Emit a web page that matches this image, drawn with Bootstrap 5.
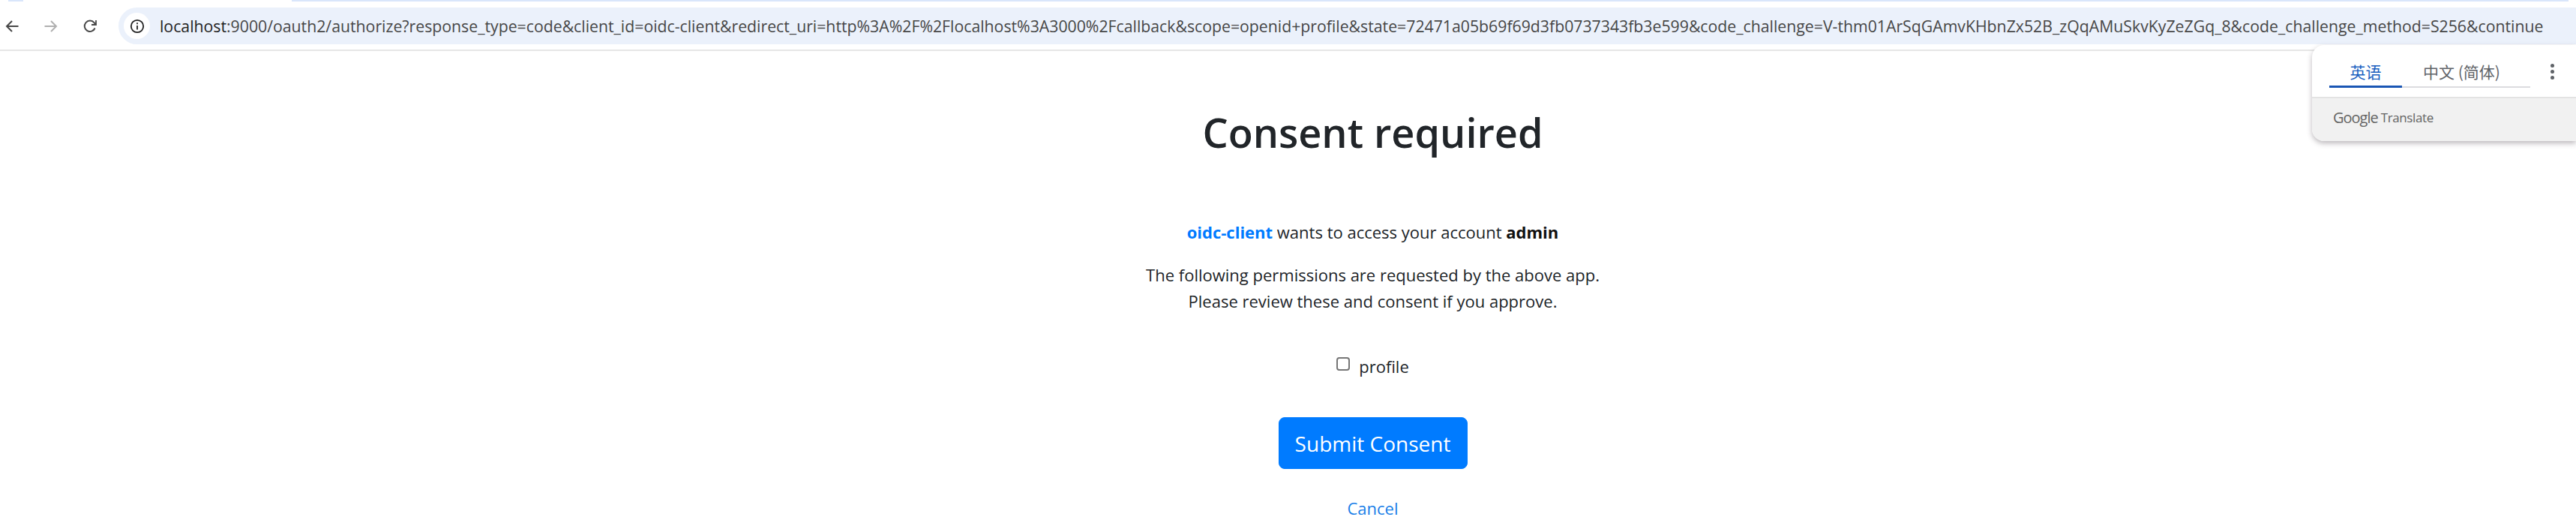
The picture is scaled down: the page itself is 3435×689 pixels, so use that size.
<!DOCTYPE html>
<html lang="en">
<head>
    <meta charset="UTF-8">
    <title>Consent required</title>
    <link rel="stylesheet" href="https://cdn.jsdelivr.net/npm/bootstrap@5.3.0/dist/css/bootstrap.min.css">
    <style>
        html, body { height: 689px; overflow: hidden; }
        body { background: #fff; font-family: "Open Sans", sans-serif; color: #212529; }
        .top-strip { height: 2px; padding-left: 11px; padding-right: 10px; }
        .strip-tab { width: 20px; background: #d9e6fb; }
        .strip-long { background: #d9e6fb; margin-left: 358px; }
        .browser-bar { height: 66px; padding-top: 8px; padding-left: 7px; border-bottom: 2px solid #e6e6e6; }
        .nav-icon { width: 18px; height: 18px; margin-right: 34px; flex: none; }
        .url-pill { height: 49px; background: #ebf1fb; border-radius: 25px 0 0 25px; padding-left: 7px; margin-left: 29px; }
        .info-dot { width: 35px; height: 35px; background: #fff; border-radius: 50%; flex: none; }
        .url-text { font-size: 21.25px; margin-left: 13px; color: #1f1f1f; white-space: nowrap; }
        .url-text span { color: #474747; }
        .consent-main { padding-left: 226px; }
        .consent-title { font-size: 54px; font-weight: 600; margin: 0; padding-top: 66px; line-height: 84px; }
        .who-line { font-size: 22px; margin-top: 75px; line-height: 32px; margin-bottom: 0; }
        .who-line b { font-weight: 700; color: #111; }
        .who-line a { color: #007bff; font-weight: 700; text-decoration: none; }
        .perm-text { font-size: 22px; line-height: 35px; margin-top: 24px; margin-bottom: 0; }
        .scope-row { margin-top: 53px; font-size: 22px; line-height: 32px; gap: 12px; }
        .scope-check { width: 18px; height: 18px; margin: 0 0 6px 0; border: 2px solid #767676; border-radius: 4px; background: #fff; appearance: none; display: block; }
        .consent-btn { background: #007bff; border-color: #007bff; font-size: 28px; width: 252px; height: 69px; margin-top: 52px; border-radius: 8px; padding: 0; }
        .cancel-link { color: #1a7fe8; font-size: 22px; text-decoration: none; margin-top: 36px; line-height: 32px; }
        .translate-pop { position: absolute; left: 3083px; top: 60px; width: 352px; height: 128px; background: #fff; border-radius: 16px 0 0 16px; box-shadow: 0 3px 7px rgba(60,50,60,.35); overflow: hidden; }
        .tab-row { height: 71px; border-bottom: 2px solid #e3e3e3; padding-left: 23px; padding-top: 20px; }
        .tab-item { font-family: "Noto Sans CJK SC", sans-serif; font-size: 21px; line-height: 30px; height: 37px; text-align: center; border-bottom: 2px solid #dcdcdf; color: #5f6368; white-space: nowrap; }
        .tab-on { width: 97px; color: #1a5fbf; border-bottom: 3px solid #1a56b4; }
        .tab-off { width: 171px; padding-right: 12px; }
        .pop-dots { width: 5px; margin-left: 27px; gap: 3px; padding-top: 5px; }
        .pop-dots i { width: 5px; height: 5px; background: #5f6368; border-radius: 50%; display: block; }
        .pop-foot { height: 57px; background: #f1f1f1; padding-left: 28px; padding-bottom: 6px; color: #636363; }
        .g-word { font-size: 20px; letter-spacing: -1px; }
        .t-word { font-size: 17px; margin-left: 4px; letter-spacing: -.4px; }
    </style>
</head>
<body>

<div class="top-strip d-flex">
    <div class="strip-tab"></div>
    <div class="strip-long flex-grow-1"></div>
</div>

<!-- browser toolbar -->
<div class="browser-bar d-flex align-items-start">
    <div class="d-flex align-items-center" style="height:49px">
        <svg class="nav-icon" viewBox="0 0 18 18" fill="none" stroke="#474747" stroke-width="2"><path d="M17.5 9H2M9 2 2 9l7 7"/></svg>
        <svg class="nav-icon" viewBox="0 0 18 18" fill="none" stroke="#b0b0b0" stroke-width="2"><path d="M.5 9H16M9 2l7 7-7 7"/></svg>
        <svg class="nav-icon m-0" viewBox="0 0 18 18" fill="none" stroke="#474747" stroke-width="2"><path d="M15.6 11.5A7.2 7.2 0 1 1 14.5 4.2L16.5 6.5"/><path d="M17 1v6h-6" stroke-width="1.8"/></svg>
    </div>
    <div class="url-pill flex-grow-1 d-flex align-items-center">
        <div class="info-dot d-flex align-items-center justify-content-center">
            <svg width="20" height="20" viewBox="0 0 20 20" fill="none" stroke="#1f1f1f" stroke-width="1.8"><circle cx="10" cy="10" r="8.2"/><path d="M10 9v5.5M10 5.2v2"/></svg>
        </div>
        <div class="url-text">localhost<span>:9000/oauth2/authorize?response_type=code&amp;client_id=oidc-client&amp;redirect_uri=http%3A%2F%2Flocalhost%3A3000%2Fcallback&amp;scope=openid+profile&amp;state=72471a05b69f69d3fb0737343fb3e599&amp;code_challenge=V-thm01ArSqGAmvKHbnZx52B_zQqAMuSkvKyZeZGq_8&amp;code_challenge_method=S256&amp;continue</span></div>
    </div>
</div>

<!-- consent form -->
<div class="consent-main d-flex flex-column align-items-center text-center">
    <h1 class="consent-title">Consent required</h1>
    <p class="who-line"><a href="#">oidc-client</a> wants to access your account <b>admin</b></p>
    <p class="perm-text">The following permissions are requested by the above app.<br>Please review these and consent if you approve.</p>
    <div class="scope-row d-flex align-items-center">
        <input type="checkbox" class="scope-check" id="profile">
        <label for="profile">profile</label>
    </div>
    <button type="button" class="btn btn-primary consent-btn">Submit Consent</button>
    <a href="#" class="cancel-link">Cancel</a>
</div>

<!-- translate popup -->
<div class="translate-pop">
    <div class="tab-row d-flex align-items-start">
        <div class="tab-item tab-on">英语</div>
        <div class="tab-item tab-off">中文&nbsp;(简体)</div>
        <div class="pop-dots d-flex flex-column"><i></i><i></i><i></i></div>
    </div>
    <div class="pop-foot d-flex align-items-center">
        <span class="g-word">Google</span><span class="t-word">Translate</span>
    </div>
</div>

</body>
</html>
